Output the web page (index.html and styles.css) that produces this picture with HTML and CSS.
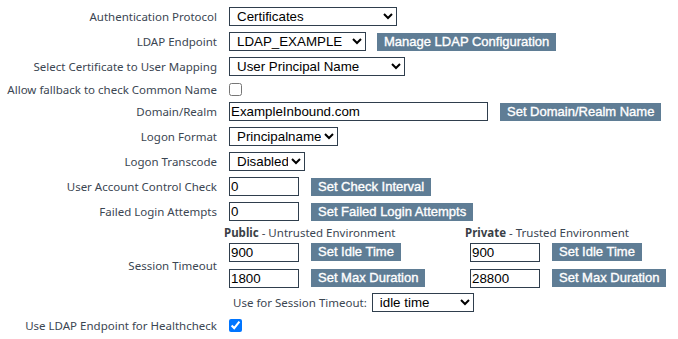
FILE: index.html
```html
<!DOCTYPE html>
<html>
<head>
<meta charset="utf-8">
<link rel="stylesheet" href="styles.css">
</head>
<body>
<div class="form">
  <div class="lbl r25">Authentication Protocol</div>
  <div class="val r25"><select class="sel w168"><option>Certificates</option></select></div>

  <div class="lbl r25">LDAP Endpoint</div>
  <div class="val r25"><select class="sel w136"><option>LDAP_EXAMPLE</option></select><button class="btn">Manage LDAP Configuration</button></div>

  <div class="lbl r25">Select Certificate to User Mapping</div>
  <div class="val r25"><select class="sel w175"><option>User Principal Name</option></select></div>

  <div class="lbl r20">Allow fallback to check Common Name</div>
  <div class="val r20"><input type="checkbox" class="chk"></div>

  <div class="lbl r25">Domain/Realm</div>
  <div class="val r25"><input class="txt w258" value="ExampleInbound.com"><button class="btn">Set Domain/Realm Name</button></div>

  <div class="lbl r25">Logon Format</div>
  <div class="val r25"><select class="sel w108"><option>Principalname</option></select></div>

  <div class="lbl r25">Logon Transcode</div>
  <div class="val r25"><select class="sel w75"><option>Disabled</option></select></div>

  <div class="lbl r25">User Account Control Check</div>
  <div class="val r25"><input class="txt w69" value="0"><button class="btn">Set Check Interval</button></div>

  <div class="lbl r25">Failed Login Attempts</div>
  <div class="val r25"><input class="txt w69" value="0"><button class="btn">Set Failed Login Attempts</button></div>

  <div class="lbl r16"></div>
  <div class="val r16 env env-head">
    <div><b>Public</b> - Untrusted Environment</div>
    <div><b>Private</b> - Trusted Environment</div>
  </div>

  <div class="lbl r50">Session Timeout</div>
  <div class="val r50 env">
    <div class="pair"><input class="txt w69" value="900"><button class="btn">Set Idle Time</button></div>
    <div class="pair"><input class="txt w69" value="900"><button class="btn">Set Idle Time</button></div>
    <div class="pair"><input class="txt w69" value="1800"><button class="btn">Set Max Duration</button></div>
    <div class="pair"><input class="txt w69" value="28800"><button class="btn">Set Max Duration</button></div>
  </div>

  <div class="lbl r25"></div>
  <div class="val r25 usefor"><span>Use for Session Timeout:</span><select class="sel w101"><option>idle time</option></select></div>

  <div class="lbl r20">Use LDAP Endpoint for Healthcheck</div>
  <div class="val r20"><input type="checkbox" class="chk" checked></div>
</div>
</body>
</html>
```
FILE: styles.css
```css
html, body {
  margin: 0;
  padding: 0;
  background: #ffffff;
}
body {
  padding: 4px 0 0 8px;
  font-family: "Noto Sans", "Open Sans", sans-serif;
  font-size: 11.5px;
  color: #3b4652;
}
.form {
  display: grid;
  grid-template-columns: 209px auto;
  column-gap: 12px;
}
.lbl {
  display: flex;
  align-items: center;
  justify-content: flex-end;
  text-align: right;
  white-space: nowrap;
}
.val {
  display: flex;
  align-items: center;
  gap: 11px;
}
.r25 { height: 25px; }
.r20 { height: 20px; }
.r16 { height: 16px; }
.r50 { height: 50px; }

.sel {
  box-sizing: border-box;
  height: 19px;
  margin: 0;
  padding: 0 0 0 3px;
  border: 1px solid #2f3e4d;
  border-radius: 0;
  background: #fff;
  font-family: "Liberation Sans", Arial, sans-serif;
  font-size: 13.333px;
  color: #000;
}
.txt {
  box-sizing: border-box;
  height: 19px;
  margin: 0;
  padding: 0 1px;
  border: 1px solid #2f3e4d;
  border-radius: 0;
  font-family: "Liberation Sans", Arial, sans-serif;
  font-size: 13.333px;
  color: #000;
  margin-right: 1px;
}
.w168 { width: 168px; }
.w136 { width: 137px; }
.w175 { width: 176px; }
.w108 { width: 109px; }
.w75 { width: 76px; }
.w101 { width: 102px; }
.w258 { width: 259px; }
.w69 { width: 70px; }

.btn {
  height: 18px;
  margin: 0;
  padding: 0 7px;
  border: none;
  border-radius: 0;
  background: #5f7d95;
  color: #fff;
  font-family: "Liberation Sans", Arial, sans-serif;
  font-size: 13px;
  font-weight: normal;
  -webkit-text-stroke: 0.35px #fff;
  line-height: 18px;
  white-space: nowrap;
}
.chk {
  width: 13px;
  height: 13px;
  margin: 0;
}
.env {
  display: grid;
  grid-template-columns: 241px auto;
  align-items: center;
  align-content: center;
  row-gap: 7px;
  column-gap: 0;
}
.env-head {
  margin-left: -5px;
  white-space: nowrap;
}
.env-head b {
  font-weight: bold;
  color: #3a3f46;
}
.pair {
  display: flex;
  align-items: center;
  gap: 11px;
}
.usefor {
  gap: 5px;
  padding-left: 4px;
}
```
